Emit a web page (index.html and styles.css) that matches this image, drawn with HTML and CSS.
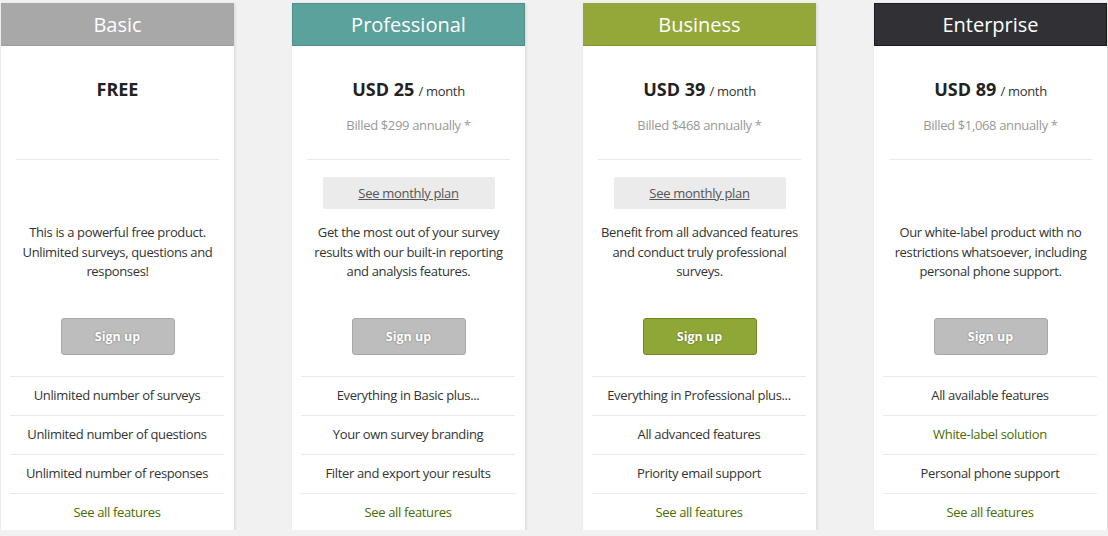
FILE: index.html
```html
<!DOCTYPE html>
<html lang="en">
<head>
<meta charset="utf-8">
<title>Pricing</title>
<link rel="stylesheet" href="styles.css">
</head>
<body>
<div class="plans">
  <div class="card">
    <div class="head head-basic">Basic</div>
    <div class="price"><b>FREE</b></div>
    <div class="billed">&nbsp;</div>
    <div class="sep"></div>
    <div class="monthly hidden"><a href="#">See monthly plan</a></div>
    <p class="desc">This is a powerful free product. Unlimited surveys, questions and responses!</p>
    <div class="btn-row"><a class="btn" href="#">Sign up</a></div>
    <ul class="features">
      <li>Unlimited number of surveys</li>
      <li>Unlimited number of questions</li>
      <li>Unlimited number of responses</li>
      <li class="link">See all features</li>
    </ul>
  </div>
  <div class="card">
    <div class="head head-pro">Professional</div>
    <div class="price"><b>USD 25</b> <span>/ month</span></div>
    <div class="billed">Billed $299 annually *</div>
    <div class="sep"></div>
    <div class="monthly"><a href="#">See monthly plan</a></div>
    <p class="desc">Get the most out of your survey results with our built-in reporting and analysis features.</p>
    <div class="btn-row"><a class="btn" href="#">Sign up</a></div>
    <ul class="features">
      <li>Everything in Basic plus...</li>
      <li>Your own survey branding</li>
      <li>Filter and export your results</li>
      <li class="link">See all features</li>
    </ul>
  </div>
  <div class="card">
    <div class="head head-biz">Business</div>
    <div class="price"><b>USD 39</b> <span>/ month</span></div>
    <div class="billed">Billed $468 annually *</div>
    <div class="sep"></div>
    <div class="monthly"><a href="#">See monthly plan</a></div>
    <p class="desc">Benefit from all advanced features and conduct truly professional surveys.</p>
    <div class="btn-row"><a class="btn btn-green" href="#">Sign up</a></div>
    <ul class="features">
      <li>Everything in Professional plus...</li>
      <li>All advanced features</li>
      <li>Priority email support</li>
      <li class="link">See all features</li>
    </ul>
  </div>
  <div class="card">
    <div class="head head-ent">Enterprise</div>
    <div class="price"><b>USD 89</b> <span>/ month</span></div>
    <div class="billed">Billed $1,068 annually *</div>
    <div class="sep"></div>
    <div class="monthly hidden"><a href="#">See monthly plan</a></div>
    <p class="desc">Our white-label product with no restrictions whatsoever, including personal phone support.</p>
    <div class="btn-row"><a class="btn" href="#">Sign up</a></div>
    <ul class="features">
      <li>All available features</li>
      <li class="green">White-label solution</li>
      <li>Personal phone support</li>
      <li class="link">See all features</li>
    </ul>
  </div>
</div>
</body>
</html>
```

FILE: styles.css
```css
html, body {
  margin: 0;
  padding: 0;
  background: #f1f1f1;
  font-family: "Open Sans", "Liberation Sans", sans-serif;
  color: #333;
}

.plans {
  display: flex;
  gap: 58px;
  padding: 3px 0 0 1px;
}

.card {
  width: 233px;
  height: 527px;
  background: #fff;
  box-shadow: 1px 1px 3px rgba(0, 0, 0, 0.12);
  display: flex;
  flex-direction: column;
}

.head {
  height: 43px;
  line-height: 43px;
  box-sizing: border-box;
  text-align: center;
  color: #fff;
  font-size: 20px;
}

.head-basic { background: #a8a8a8; border-bottom: 1px solid #9e9e9e; }
.head-pro { background: #5aa29b; border: 1px solid #4c9089; line-height: 41px; }
.head-biz { background: #94a83a; border-bottom: 1px solid #83972c; }
.head-ent { background: #313135; border: 1px solid #1c1c1e; line-height: 41px; }

.price {
  margin-top: 31px;
  text-align: center;
  line-height: 24px;
  height: 24px;
}

.price b {
  font-size: 18px;
  font-weight: 700;
  color: #222;
}

.price span {
  font-size: 13px;
  letter-spacing: -0.3px;
}

.billed {
  margin-top: 14px;
  text-align: center;
  font-size: 13px;
  letter-spacing: -0.35px;
  line-height: 20px;
  height: 20px;
  color: #999;
}

.sep {
  margin: 24px 15px 0;
  border-top: 1px solid #e9e9e9;
}

.monthly {
  margin: 17px auto 0;
  width: 172px;
  height: 32px;
  background: #ebebeb;
  border-radius: 2px;
  text-align: center;
  line-height: 32px;
  font-size: 13px;
  letter-spacing: -0.3px;
}

.monthly a {
  color: #555;
  text-decoration: underline;
}

.hidden {
  visibility: hidden;
}

.desc {
  margin: 14px 12px 0;
  height: 59px;
  font-size: 13px;
  letter-spacing: -0.35px;
  line-height: 19.5px;
  text-align: center;
  color: #333;
}

.btn-row {
  margin-top: 36px;
  display: flex;
  justify-content: center;
}

.btn {
  display: block;
  width: 114px;
  height: 37px;
  box-sizing: border-box;
  line-height: 35px;
  text-align: center;
  background: #bdbdbd;
  border: 1px solid #a8a8a8;
  border-radius: 3px;
  color: #fff;
  font-size: 12.5px;
  font-weight: 700;
  text-decoration: none;
  text-shadow: 0 0 2px rgba(0, 0, 0, 0.4);
}

.btn-green {
  background: #8fa737;
  border-color: #6e8a1e;
}

.features {
  list-style: none;
  margin: 21px 10px 0 9px;
  padding: 0;
}

.features li {
  border-top: 1px solid #eaeaea;
  height: 39px;
  box-sizing: border-box;
  line-height: 37px;
  text-align: center;
  font-size: 13px;
  letter-spacing: -0.35px;
  color: #333;
}

.features li.link,
.features li.green {
  color: #4b6b00;
}
```
